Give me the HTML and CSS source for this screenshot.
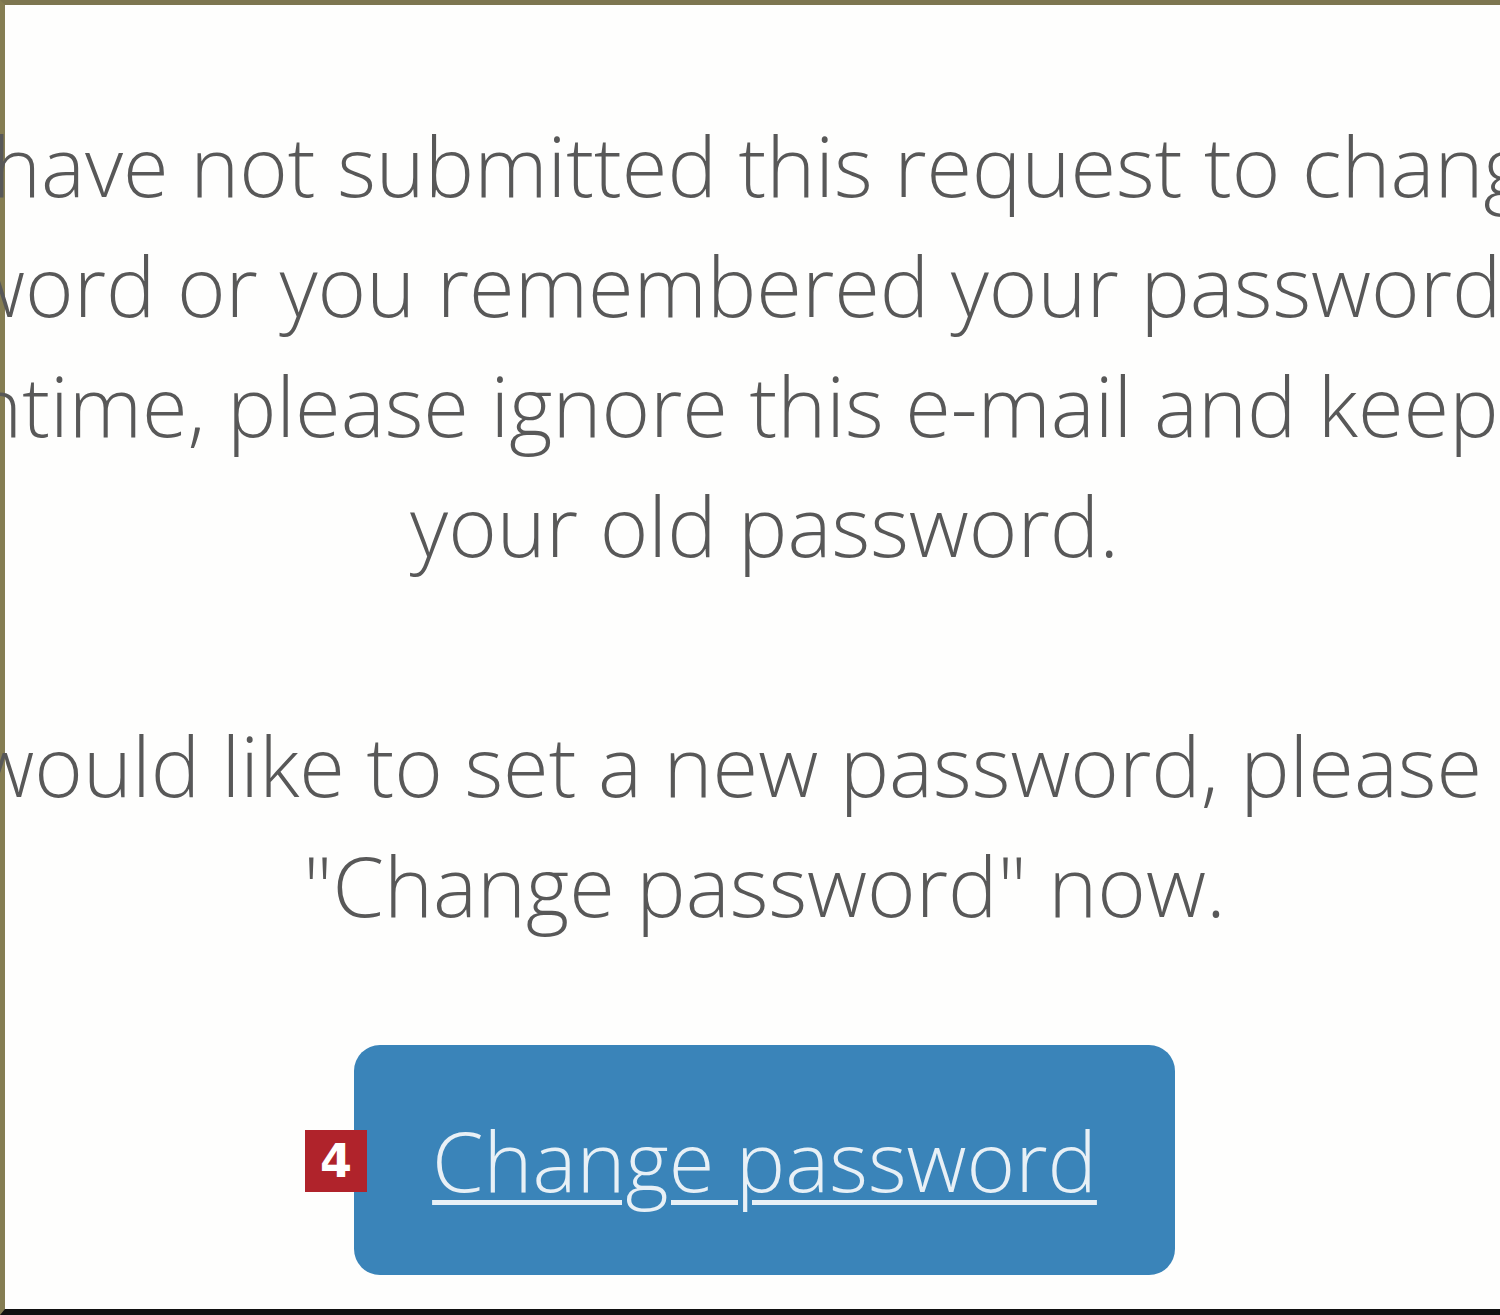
FILE: index.html
```html
<!DOCTYPE html>
<html lang="en">
<head>
<meta charset="utf-8">
<title>Change password</title>
<link rel="stylesheet" href="styles.css">
</head>
<body>
<div class="frame">
  <div class="content">
    <p class="msg">If you have not submitted this request to change your<br>password or you remembered your password in the<br>meantime, please ignore this e-mail and keep using<br>your old password.</p>
    <p class="msg">If you would like to set a new password, please click on<br>"Change password" now.</p>
    <div class="action">
      <a class="btn" href="#"><span class="badge">4</span>Change password</a>
    </div>
  </div>
</div>
</body>
</html>
```
FILE: styles.css
```css
html, body {
  margin: 0;
  padding: 0;
  background: #fefefd;
  overflow: hidden;
}
.frame {
  box-sizing: border-box;
  width: 1524px;
  height: 1315px;
  border-left: 5px solid #857d52;
  border-top: 5px solid #7d7650;
  border-bottom: 6px solid #111;
  background: #fefefd;
}
.content {
  margin: 0 -500px;
  padding-top: 100px;
  text-align: center;
  font-family: "Open Sans", "Segoe UI", sans-serif;
  font-weight: 300;
  font-size: 83px;
  line-height: 120px;
  color: #585858;
}
.msg {
  margin: 0 0 120px;
  white-space: nowrap;
}
.msg + .msg {
  margin-bottom: 100px;
}
.action {
  display: flex;
  justify-content: center;
}
.btn {
  position: relative;
  box-sizing: border-box;
  display: flex;
  align-items: center;
  justify-content: center;
  width: 821px;
  height: 230px;
  border-radius: 26px;
  background: #3a84b9;
  color: #e8f0f6;
  text-decoration: underline;
  text-decoration-thickness: 5px;
  text-underline-offset: 8px;
}
.badge {
  position: absolute;
  left: -49px;
  top: 85px;
  width: 62px;
  height: 62px;
  background: #b0232b;
  color: #fff;
  font-family: "DejaVu Sans", sans-serif;
  font-weight: bold;
  font-size: 46px;
  line-height: 62px;
  text-align: center;
  text-decoration: none;
  display: block;
}
```
